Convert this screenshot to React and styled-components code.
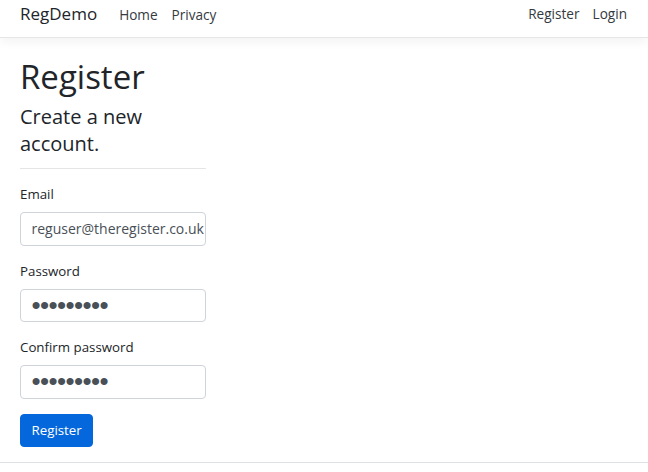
import React from "react";
import styled, { createGlobalStyle } from "styled-components";

const GlobalStyle = createGlobalStyle`
  html, body {
    margin: 0;
    padding: 0;
    background: #fff;
  }
  body {
    font-family: "Open Sans", "Noto Sans", sans-serif;
    font-size: 13.3px;
    line-height: 21px;
    color: #212529;
  }
  * {
    box-sizing: border-box;
  }
`;

const Header = styled.header`
  height: 38px;
  display: flex;
  align-items: center;
  justify-content: space-between;
  padding: 0 21px 10px 20px;
  border-bottom: 1px solid #e6e6e6;
  box-shadow: 0 4px 10px rgba(0, 0, 0, 0.05);
  background: #fff;
`;

const NavGroup = styled.nav`
  display: flex;
  align-items: baseline;
  gap: ${(p) => p.$gap || 14}px;
`;

const Brand = styled.a`
  font-size: 17px;
  color: #212529;
  text-decoration: none;
  margin-right: 8px;
`;

const NavLink = styled.a`
  font-size: 13.6px;
  color: #343a40;
  text-decoration: none;
`;

const Main = styled.main`
  padding: 0 20px;
`;

const Column = styled.div`
  width: 186px;
`;

const Title = styled.h1`
  margin: 18px 0 0;
  font-size: 33px;
  font-weight: 400;
  line-height: 42px;
`;

const Subtitle = styled.h4`
  margin: 5px 0 0;
  font-size: 20px;
  font-weight: 400;
  line-height: 27px;
`;

const Rule = styled.hr`
  margin: 11px 0 15px;
  border: 0;
  border-top: 1px solid #e5e5e5;
`;

const FormGroup = styled.div`
  margin-bottom: 15px;
`;

const Label = styled.label`
  display: block;
  margin-bottom: 7px;
`;

const Input = styled.input`
  display: block;
  width: 100%;
  height: 33.5px;
  padding: 0 1px 0 10.5px;
  font-family: inherit;
  font-size: 14px;
  color: #495057;
  background: #fff;
  border: 1px solid #ced4da;
  border-radius: 4px;
  outline: none;

  &[type="password"] {
    font-family: "Liberation Sans", Arial, sans-serif;
    font-size: 26px;
    letter-spacing: -0.6px;
  }
`;

const Button = styled.button`
  display: inline-block;
  height: 33.5px;
  padding: 0 10.5px;
  font-family: inherit;
  font-size: 13.3px;
  color: #fff;
  background: #0467dc;
  border: 1px solid #0467dc;
  border-radius: 4px;
  cursor: pointer;
`;

const Footer = styled.footer`
  margin-top: 15px;
  height: 60px;
  border-top: 1px solid #dee2e6;
`;

export default function App() {
  return (
    <>
      <GlobalStyle />
      <Header>
        <NavGroup>
          <Brand href="#">RegDemo</Brand>
          <NavLink href="#">Home</NavLink>
          <NavLink href="#">Privacy</NavLink>
        </NavGroup>
        <NavGroup $gap={13}>
          <NavLink href="#">Register</NavLink>
          <NavLink href="#">Login</NavLink>
        </NavGroup>
      </Header>
      <Main>
        <Column>
          <Title>Register</Title>
          <Subtitle>Create a new account.</Subtitle>
          <Rule />
          <form onSubmit={(e) => e.preventDefault()}>
            <FormGroup>
              <Label htmlFor="email">Email</Label>
              <Input
                id="email"
                type="email"
                defaultValue="reguser@theregister.co.uk"
              />
            </FormGroup>
            <FormGroup>
              <Label htmlFor="password">Password</Label>
              <Input id="password" type="password" defaultValue="Passw0rd!" />
            </FormGroup>
            <FormGroup>
              <Label htmlFor="confirm">Confirm password</Label>
              <Input id="confirm" type="password" defaultValue="Passw0rd!" />
            </FormGroup>
            <Button type="submit">Register</Button>
          </form>
        </Column>
      </Main>
      <Footer />
    </>
  );
}
